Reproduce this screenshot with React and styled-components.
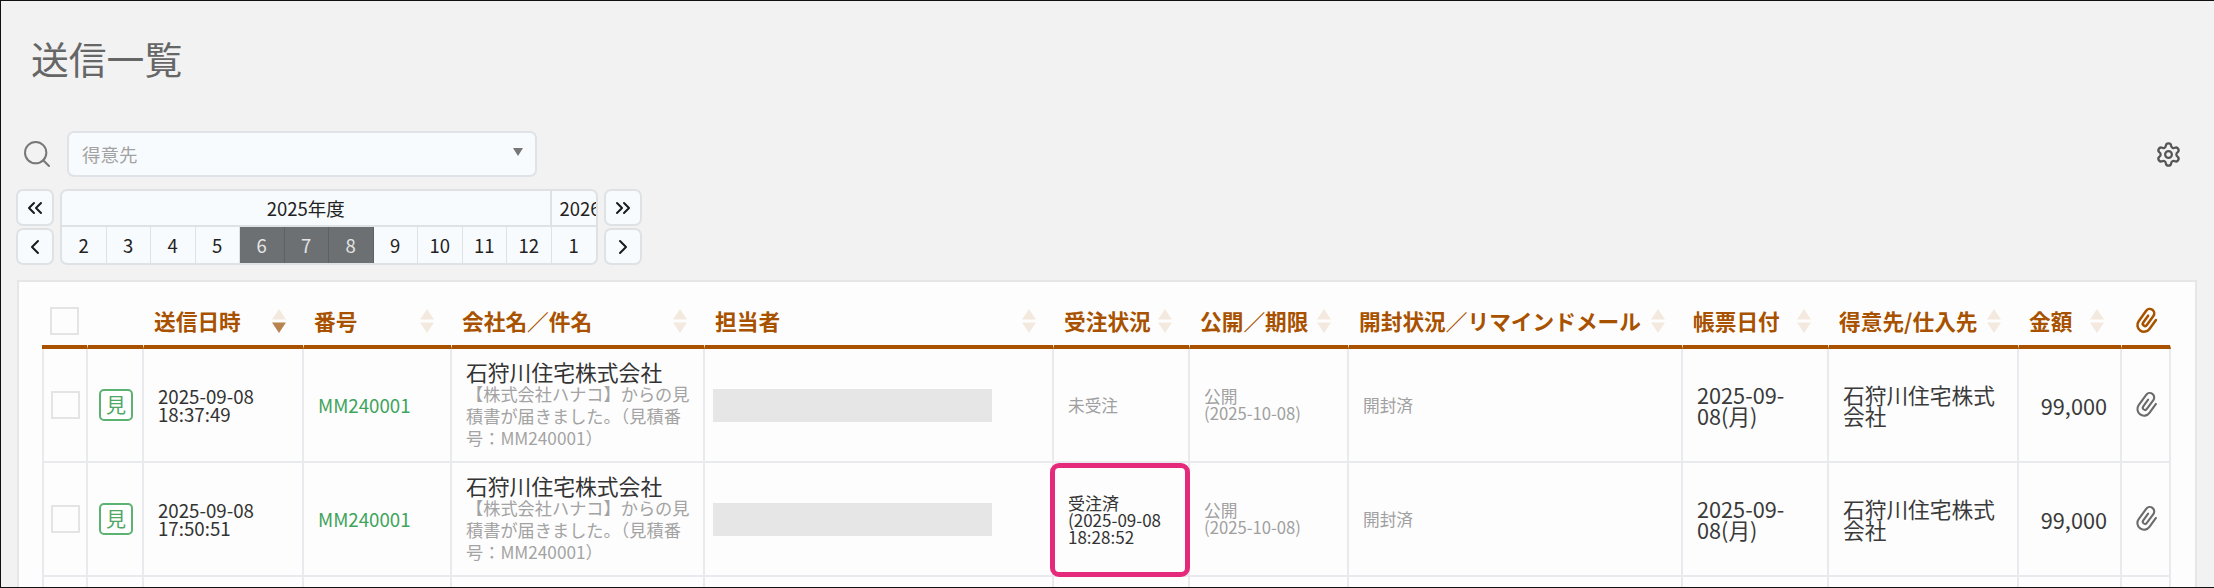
import React from "react";
import styled, { createGlobalStyle } from "styled-components";
import { ChevronLeft, ChevronRight, ChevronsLeft, ChevronsRight, Search, Settings } from "lucide-react";

const GlobalStyle = createGlobalStyle`
  html, body {
    margin: 0;
    padding: 0;
    background: #f2f2f2;
  }
  * {
    box-sizing: border-box;
  }
`;

const Page = styled.div`
  width: 2214px;
  height: 588px;
  overflow: hidden;
  background: #f2f2f2;
  border-top: 1px solid #111;
  border-left: 1px solid #111;
  border-bottom: 1px solid #111;
  padding-top: 33px;
  font-family: "Noto Sans CJK JP", "Noto Sans", sans-serif;
  color: #333;
`;

const Title = styled.h1`
  margin: 0 0 0 30px;
  height: 48px;
  font-size: 37.8px;
  line-height: 48px;
  font-weight: 400;
  color: #666;
`;

const FilterBar = styled.div`
  display: flex;
  align-items: center;
  height: 46px;
  margin-top: 49px;
  padding: 0 32px 0 20px;
  color: #777;
`;

const FilterSelect = styled.div`
  position: relative;
  width: 470px;
  height: 46px;
  margin-left: 14px;
  padding-left: 13px;
  background: #f8fbfd;
  border: 2px solid #dfe3e7;
  border-radius: 7px;
  font-size: 18.5px;
  line-height: 42px;
  color: #a3a3a3;
`;

const SelectArrow = styled.span`
  position: absolute;
  top: 15px;
  right: 12px;
  width: 0;
  height: 0;
  border-left: 5px solid transparent;
  border-right: 5px solid transparent;
  border-top: 8px solid #777;
`;

const GearSlot = styled.div`
  display: flex;
  margin-left: auto;
  color: #555;
`;

const PeriodRow = styled.div`
  display: flex;
  gap: 6px;
  margin: 12px 0 0 15px;
`;

const NavColumn = styled.div`
  display: flex;
  flex-direction: column;
  gap: 2px;
`;

const NavButton = styled.div`
  display: flex;
  align-items: center;
  justify-content: center;
  width: 38px;
  height: 37px;
  background: #f8fbfd;
  border: 2px solid #dfe2e5;
  border-radius: 7px;
  color: #1a1a1a;
`;

const Calendar = styled.div`
  display: grid;
  grid-template-columns: repeat(12, 44.5px);
  grid-template-rows: 36px 36px;
  width: 538px;
  height: 76px;
  overflow: hidden;
  background: #f8fbfd;
  border: 2px solid #dfe2e5;
  border-radius: 7px;
`;

const YearCell = styled.div`
  grid-column: span ${props => props.$span};
  overflow: hidden;
  padding-left: ${props => (props.$clipped ? "8px" : "0")};
  border-right: ${props => (props.$clipped ? "none" : "2px solid #dfe2e5")};
  border-bottom: 2px solid #dfe2e5;
  font-size: 18.5px;
  line-height: 34px;
  text-align: ${props => (props.$clipped ? "left" : "center")};
  white-space: nowrap;
  color: #222;
`;

const MonthCell = styled.div`
  border-right: 1px solid ${props => (props.$active ? "#5d6164" : "#dfe2e5")};
  background: ${props => (props.$active ? "#6c7073" : "transparent")};
  font-size: 18.5px;
  line-height: 36px;
  text-align: center;
  color: ${props => (props.$active ? "#e4e4e4" : "#222")};

  &:last-child {
    border-right: none;
  }
`;

const Card = styled.div`
  height: 320px;
  margin: 15px 17px 0 16px;
  padding: 18px 24px 0 23px;
  background: #fdfdfd;
  border: 2px solid #e6e6e6;
  border-bottom: none;
`;

const Table = styled.table`
  width: 2129px;
  table-layout: fixed;
  border-collapse: separate;
  border-spacing: 0;
`;

const HeadCell = styled.th`
  height: 49px;
  padding: 0 ${props => (props.$plain ? "0" : "17px")} 4px ${props => (props.$plain ? "8px" : "10px")};
  border-bottom: 4px solid #a85200;
  border-right: 1px solid #fdfdfd;
  font-size: 21.7px;
  font-weight: 700;
  color: #a85200;
  text-align: left;
  white-space: nowrap;
`;

const HeadInner = styled.div`
  display: flex;
  align-items: center;
  justify-content: space-between;
`;

const Cell = styled.td`
  height: 114px;
  padding: 0 ${props => (props.$tight ? "8px" : "13px")} 0 ${props => (props.$tight ? "8px" : "14px")};
  border-right: 2px solid #e8eaee;
  border-bottom: 2px solid #e8eaee;
  font-size: 18.7px;
  line-height: 18.5px;
  text-align: ${props => (props.$end ? "right" : "left")};
  vertical-align: middle;

  &:first-child {
    border-left: 2px solid #e8eaee;
  }
`;

const Check = styled.span`
  display: block;
  width: 29px;
  height: 28px;
  margin-left: ${props => props.$offset}px;
  background: #fdfdfd;
  border: 2px solid #e4e4e4;
`;

const Badge = styled.span`
  display: flex;
  align-items: center;
  justify-content: center;
  width: 34px;
  height: 32px;
  margin-left: 3px;
  background: #fff;
  border: 2px solid #5cb270;
  border-radius: 5px;
  font-size: 20px;
  color: #4ea765;
`;

const DocNumber = styled.span`
  color: #3fa45c;
`;

const CompanyName = styled.div`
  font-size: 21.8px;
  line-height: 22px;
  color: #333;
`;

const Subject = styled.div`
  font-size: 17.2px;
  line-height: 22px;
  color: #a3a3a3;
`;

const MaskedBar = styled.div`
  width: 279px;
  height: 33px;
  background: #e6e6e6;
`;

const MutedText = styled.div`
  font-size: 16.7px;
  line-height: 17px;
  color: #a0a0a0;
`;

const LargeText = styled.div`
  font-size: 21.7px;
  line-height: 21px;
  color: #3a3a3a;
`;

const StatusCell = styled(Cell)`
  position: relative;
`;

const StatusText = styled.div`
  font-size: 17px;
  line-height: 17px;
  color: #333;
`;

const Highlight = styled.span`
  position: absolute;
  top: 0;
  left: -4px;
  width: 140px;
  height: 114px;
  border: 5px solid #e52a7c;
  border-radius: 9px;
`;

const SortIcon = ({ active }) => (
  <svg width="14" height="24" viewBox="0 0 14 24" style={{ flexShrink: 0 }}>
    <path d="M7 0 L14 10.5 H0 Z" fill="#f3e9df" />
    <path d="M7 24 L14 13.5 H0 Z" fill={active ? "#b9834f" : "#f3e9df"} />
  </svg>
);

const ClipIcon = ({ color, width }) => (
  <svg width="28" height="28" viewBox="0 0 24 24" style={{ display: "block", marginLeft: 3 }}>
    <g transform="rotate(36 12 12) translate(12 12) scale(0.95) translate(-12 -12)">
      <path
        d="M10 8 V15.5 A2 2 0 0 0 14 15.5 V5.5 A4 4 0 0 0 6 5.5 V17 A6 6 0 0 0 18 17 V7"
        fill="none"
        stroke={color}
        strokeWidth={width}
        strokeLinecap="round"
        transform="translate(0 -0.5)"
      />
    </g>
  </svg>
);

const COLUMN_WIDTHS = [46, 56, 160, 148, 253, 349, 136, 159, 334, 146, 190, 103, 49];
const MONTHS = [2, 3, 4, 5, 6, 7, 8, 9, 10, 11, 12, 1];
const ACTIVE_MONTHS = [6, 7, 8];
const HEADINGS = [
  "番号",
  "会社名／件名",
  "担当者",
  "受注状況",
  "公開／期限",
  "開封状況／リマインドメール",
  "帳票日付",
  "得意先/仕入先",
  "金額",
];
const ROWS = [
  { date: "2025-09-08", time: "18:37:49", ordered: false },
  { date: "2025-09-08", time: "17:50:51", ordered: true },
];

function DataRow({ row }) {
  return (
    <tr>
      <Cell $tight>
        <Check $offset={-1} />
      </Cell>
      <Cell $tight>
        <Badge>見</Badge>
      </Cell>
      <Cell>
        {row.date}
        <br />
        {row.time}
      </Cell>
      <Cell>
        <DocNumber>MM240001</DocNumber>
      </Cell>
      <Cell>
        <CompanyName>石狩川住宅株式会社</CompanyName>
        <Subject>【株式会社ハナコ】からの見積書が届きました。（見積番号：MM240001）</Subject>
      </Cell>
      <Cell $tight>
        <MaskedBar />
      </Cell>
      {row.ordered ? (
        <StatusCell>
          <Highlight />
          <StatusText>
            受注済
            <br />
            (2025-09-08
            <br />
            18:28:52
          </StatusText>
        </StatusCell>
      ) : (
        <Cell>
          <MutedText>未受注</MutedText>
        </Cell>
      )}
      <Cell>
        <MutedText>
          公開
          <br />
          (2025-10-08)
        </MutedText>
      </Cell>
      <Cell>
        <MutedText>開封済</MutedText>
      </Cell>
      <Cell>
        <LargeText>2025-09-08(月)</LargeText>
      </Cell>
      <Cell>
        <LargeText>石狩川住宅株式会社</LargeText>
      </Cell>
      <Cell $end>
        <LargeText>99,000</LargeText>
      </Cell>
      <Cell $tight>
        <ClipIcon color="#6b6b6b" width={1.9} />
      </Cell>
    </tr>
  );
}

export default function App() {
  return (
    <Page>
      <GlobalStyle />
      <Title>送信一覧</Title>
      <FilterBar>
        <Search size={32} strokeWidth={1.5} />
        <FilterSelect>
          得意先
          <SelectArrow />
        </FilterSelect>
        <GearSlot>
          <Settings size={27} strokeWidth={2} />
        </GearSlot>
      </FilterBar>
      <PeriodRow>
        <NavColumn>
          <NavButton>
            <ChevronsLeft size={24} />
          </NavButton>
          <NavButton>
            <ChevronLeft size={24} />
          </NavButton>
        </NavColumn>
        <Calendar>
          <YearCell $span={11}>2025年度</YearCell>
          <YearCell $span={1} $clipped>
            2026年度
          </YearCell>
          {MONTHS.map(month => (
            <MonthCell key={month} $active={ACTIVE_MONTHS.includes(month)}>
              {month}
            </MonthCell>
          ))}
        </Calendar>
        <NavColumn>
          <NavButton>
            <ChevronsRight size={24} />
          </NavButton>
          <NavButton>
            <ChevronRight size={24} />
          </NavButton>
        </NavColumn>
      </PeriodRow>
      <Card>
        <Table>
          <colgroup>
            {COLUMN_WIDTHS.map((width, index) => (
              <col key={index} width={width} />
            ))}
          </colgroup>
          <thead>
            <tr>
              <HeadCell $plain>
                <Check $offset={0} />
              </HeadCell>
              <HeadCell $plain />
              <HeadCell>
                <HeadInner>
                  送信日時
                  <SortIcon active />
                </HeadInner>
              </HeadCell>
              {HEADINGS.map(heading => (
                <HeadCell key={heading}>
                  <HeadInner>
                    {heading}
                    <SortIcon />
                  </HeadInner>
                </HeadCell>
              ))}
              <HeadCell $plain>
                <ClipIcon color="#a85200" width={2.3} />
              </HeadCell>
            </tr>
          </thead>
          <tbody>
            {ROWS.map(row => (
              <DataRow key={row.time} row={row} />
            ))}
            <tr>
              {COLUMN_WIDTHS.map((width, index) => (
                <Cell key={index} />
              ))}
            </tr>
          </tbody>
        </Table>
      </Card>
    </Page>
  );
}
